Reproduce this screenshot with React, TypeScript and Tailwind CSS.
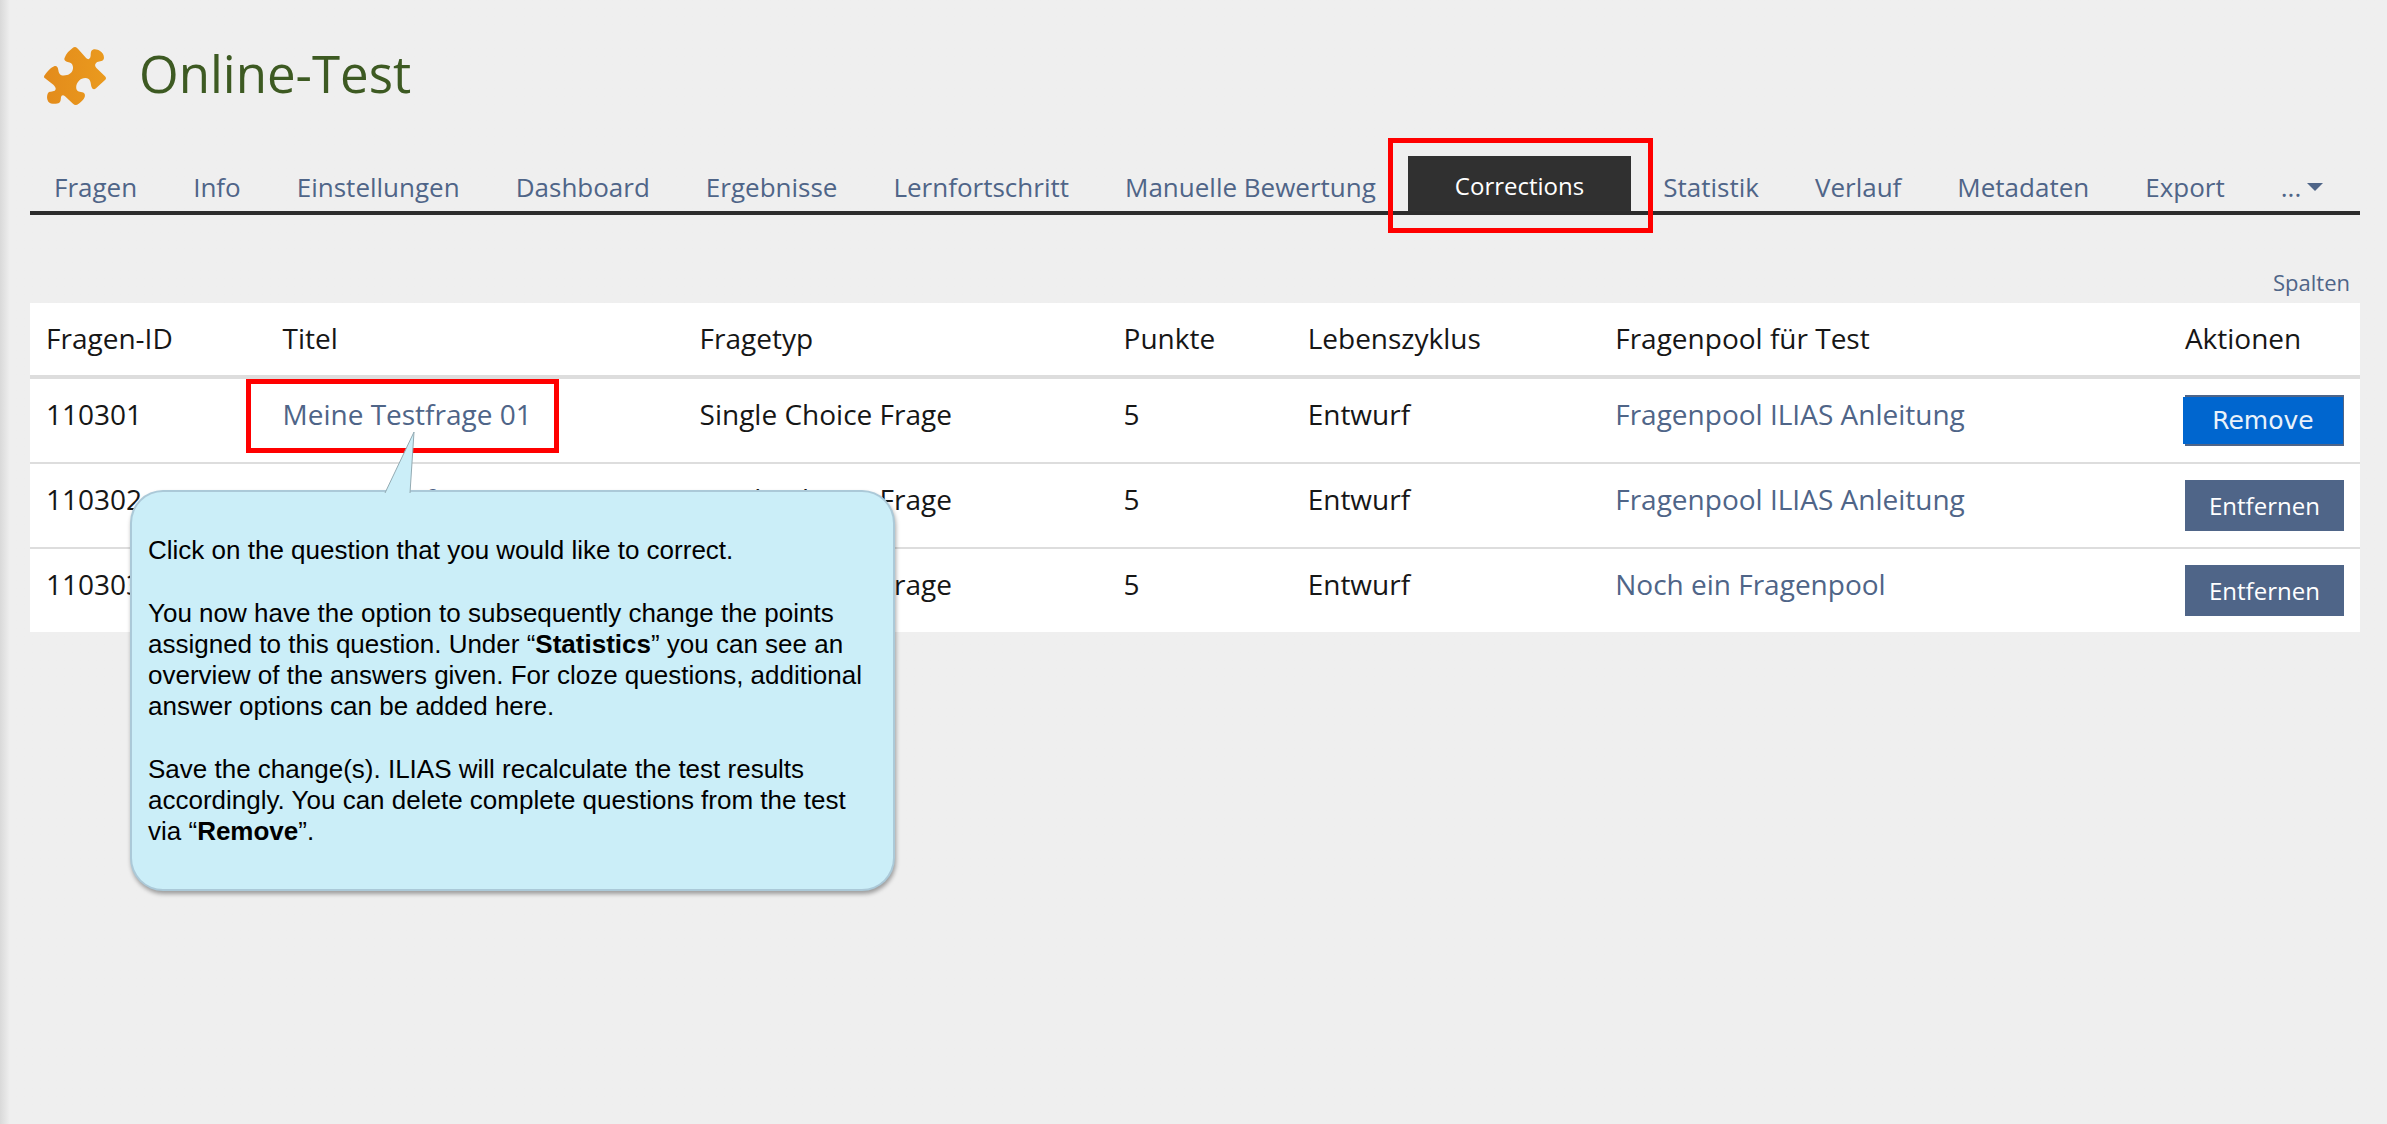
import clsx from 'clsx';

type Question = {
  id: string;
  title: string;
  type: string;
  points: number;
  lifecycle: string;
  pool: string;
};

const tabsBefore = [
  'Fragen',
  'Info',
  'Einstellungen',
  'Dashboard',
  'Ergebnisse',
  'Lernfortschritt',
  'Manuelle Bewertung',
];

const tabsAfter = ['Statistik', 'Verlauf', 'Metadaten', 'Export'];

const questions: Question[] = [
  {
    id: '110301',
    title: 'Meine Testfrage 01',
    type: 'Single Choice Frage',
    points: 5,
    lifecycle: 'Entwurf',
    pool: 'Fragenpool ILIAS Anleitung',
  },
  {
    id: '110302',
    title: 'Meine Testfrage 02',
    type: 'Single Choice Frage',
    points: 5,
    lifecycle: 'Entwurf',
    pool: 'Fragenpool ILIAS Anleitung',
  },
  {
    id: '110303',
    title: 'Meine Testfrage 03',
    type: 'Single Choice Frage',
    points: 5,
    lifecycle: 'Entwurf',
    pool: 'Noch ein Fragenpool',
  },
];

function PuzzleIcon() {
  return (
    <svg viewBox="0 0 186 174" className="mt-[7px] h-[58px] w-[62px]" aria-hidden="true">
      <defs>
        <linearGradient id="puzzle" x1="0" x2="1" y1="0" y2="0">
          <stop offset="0" stopColor="#e38b1b" />
          <stop offset="1" stopColor="#ea9a1e" />
        </linearGradient>
      </defs>
      <path
        fill="url(#puzzle)"
        d="M93 0 C97 0 100 3 103 7 L127 34 C131 38 137 37 139 31 C141 24 139 18 142 12 C147 4 161 7 168 12 C177 17 182 28 179 37 C175 45 164 42 157 47 C151 52 153 59 158 64 L183 88 C187 92 187 95 183 99 L156 124 C151 129 145 127 143 121 C140 113 141 101 134 96 C125 90 112 94 105 101 C97 109 94 122 99 130 C104 137 118 133 122 141 C126 152 114 163 104 170 C98 175 92 175 87 170 L63 148 C58 143 52 144 51 151 C50 157 51 163 46 167 C38 172 20 172 13 164 C8 157 8 145 12 138 C18 131 30 136 34 129 C37 123 33 118 28 113 L3 94 C-1 91 -1 87 3 83 C10 74 20 61 32 57 C43 55 42 68 45 77 C48 86 59 87 69 84 C80 81 88 72 87 60 C86 50 79 46 71 45 C63 43 59 38 62 32 C66 19 77 10 86 3 C88 1 90 0 93 0 Z"
      />
    </svg>
  );
}

function Callout() {
  return (
    <aside className="absolute top-[187px] left-[100px] w-[765px] rounded-[33px] border-2 border-slate-500/30 bg-[#cbeef8] bg-clip-border px-4 pt-[43px] pb-[42px] font-['Liberation_Sans',Arial,sans-serif] text-[26px] leading-[31px] text-black shadow-[1px_3px_4px_rgba(0,0,0,0.35)]">
      <svg
        viewBox="0 0 32 62"
        className="absolute top-[-61px] left-[252px] h-[62px] w-8"
        aria-hidden="true"
      >
        <path d="M1 62 L30 1 L26 62" fill="#cbeef8" stroke="#93aab2" />
      </svg>
      <div className="space-y-8">
        <p>Click on the question that you would like to correct.</p>
        <p>
          You now have the option to subsequently change the points
          <br />
          assigned to this question. Under “<strong>Statistics</strong>” you can see an
          <br />
          overview of the answers given. For cloze questions, additional
          <br />
          answer options can be added here.
        </p>
        <p>
          Save the change(s). ILIAS will recalculate the test results
          <br />
          accordingly. You can delete complete questions from the test
          <br />
          via “<strong>Remove</strong>”.
        </p>
      </div>
    </aside>
  );
}

function Tab({ label }: { label: string }) {
  return (
    <a href="#" className="px-6 pt-2 pb-[6px] whitespace-nowrap">
      {label}
    </a>
  );
}

export default function App() {
  return (
    <div className="min-h-screen bg-[#efefef] bg-linear-to-r from-[#d9d9d9] to-[#efefef] to-[10px] pr-[27px] pl-[30px] font-['Open_Sans','Noto_Sans',sans-serif] text-[#161616]">
      <header className="flex items-start gap-[33px] px-[14px] pt-10">
        <PuzzleIcon />
        <h1 className="text-[51px] leading-[66px] text-[#3d5a22]">Online-Test</h1>
      </header>

      <nav className="mt-[50px] flex items-end gap-2 border-b-4 border-[#2c2c2c] text-[26px] leading-9 text-[#4f6588]">
        {tabsBefore.map((label) => (
          <Tab key={label} label={label} />
        ))}
        <a
          href="#"
          aria-current="page"
          className="relative bg-[#303030] px-[47px] pt-3 pb-[7px] text-[24px] leading-9 text-white"
        >
          Corrections
          <span className="absolute -top-[18px] -right-[22px] -bottom-[22px] -left-[20px] border-[5px] border-[#ff0000]" />
        </a>
        {tabsAfter.map((label) => (
          <Tab key={label} label={label} />
        ))}
        <button type="button" className="flex items-center gap-[6px] px-6 pt-2 pb-[6px]">
          ...
          <svg viewBox="0 0 16 8" className="h-2 w-4" aria-hidden="true">
            <path d="M0 0 H16 L8 8 Z" fill="currentColor" />
          </svg>
        </button>
      </nav>

      <main>
        <div className="flex justify-end px-[10px] pt-[51px] pb-[5px]">
          <button type="button" className="text-[22px] leading-8 text-[#4f6588]">
            Spalten
          </button>
        </div>

        <div className="relative">
          <table className="w-full table-fixed bg-white text-left text-[28px] leading-10">
            <colgroup>
              <col className="w-[10.15%]" />
              <col className="w-[17.9%]" />
              <col className="w-[18.2%]" />
              <col className="w-[7.9%]" />
              <col className="w-[13.2%]" />
              <col className="w-[24.45%]" />
              <col />
            </colgroup>
            <thead>
              <tr className="border-b-4 border-[#dddddd]">
                {[
                  'Fragen-ID',
                  'Titel',
                  'Fragetyp',
                  'Punkte',
                  'Lebenszyklus',
                  'Fragenpool für Test',
                  'Aktionen',
                ].map((label) => (
                  <th key={label} className="px-4 pt-[15px] pb-[17px] font-normal">
                    {label}
                  </th>
                ))}
              </tr>
            </thead>
            <tbody>
              {questions.map((question, index) => (
                <tr
                  key={question.id}
                  className={clsx(
                    'align-top',
                    index < questions.length - 1 && 'border-b-2 border-[#dddddd]',
                  )}
                >
                  <td className="px-4 pt-[15px]">{question.id}</td>
                  <td className="px-4 pt-[15px]">
                    <a href="#" className="relative text-[#4f6588]">
                      {question.title}
                      {index === 0 ? (
                        <span className="absolute -top-4 -right-[27px] -bottom-5 -left-[36px] border-[5px] border-[#ff0000]" />
                      ) : null}
                    </a>
                  </td>
                  <td className="px-4 pt-[15px]">{question.type}</td>
                  <td className="px-4 pt-[15px]">{question.points}</td>
                  <td className="px-4 pt-[15px]">{question.lifecycle}</td>
                  <td className="px-4 pt-[15px]">
                    <a href="#" className="text-[#4f6588]">
                      {question.pool}
                    </a>
                  </td>
                  <td className="p-4">
                    {index === 0 ? (
                      <button
                        type="button"
                        className="relative block h-[51px] w-full bg-[#4f6588] text-[#eaf2fa]"
                      >
                        <span className="absolute top-[2px] right-px bottom-[2px] -left-[2px] flex items-center justify-center bg-[#0066cf] font-['DejaVu_Sans',Verdana,sans-serif] text-[25px]">
                          Remove
                        </span>
                      </button>
                    ) : (
                      <button
                        type="button"
                        className="block h-[51px] w-full bg-[#4f6588] text-[24px] text-white"
                      >
                        Entfernen
                      </button>
                    )}
                  </td>
                </tr>
              ))}
            </tbody>
          </table>
          <Callout />
        </div>
      </main>
    </div>
  );
}
